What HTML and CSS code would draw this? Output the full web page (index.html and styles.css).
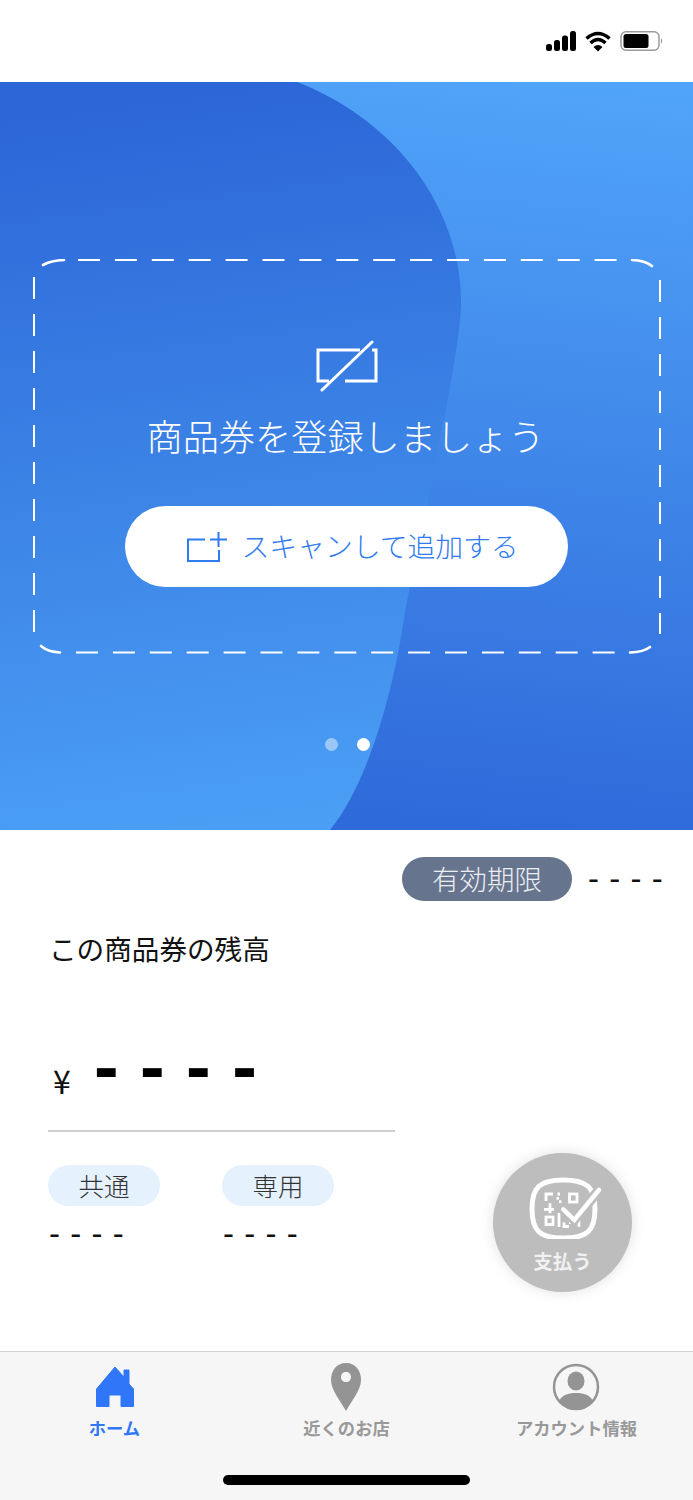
FILE: index.html
```html
<!DOCTYPE html>
<html lang="ja">
<head>
<meta charset="utf-8">
<title>商品券</title>
<link rel="stylesheet" href="styles.css">
</head>
<body>
<div class="phone">
  <header class="status">
    <svg class="status-icons" width="118" height="24" viewBox="0 0 118 24">
      <rect x="0" y="15" width="6" height="7" rx="2.5" fill="#000"/>
      <rect x="8" y="11" width="6" height="11" rx="2.5" fill="#000"/>
      <rect x="16" y="6.500" width="6" height="15.500" rx="2.500" fill="#000"/>
      <rect x="24" y="2" width="6" height="20" rx="2.500" fill="#000"/>
      <path d="M40.500 9.500 Q52 -0.500 63.500 9.500" fill="none" stroke="#000" stroke-width="3.600"/>
      <path d="M44.500 14 Q52 7 59.500 14" fill="none" stroke="#000" stroke-width="3.400"/>
      <path d="M47.500 18 Q52 14 56.500 18 L52 22.500Z" fill="#000"/>
      <rect x="75" y="2.800" width="38" height="18.500" rx="5" fill="none" stroke="#9a9a9a" stroke-width="1.500"/>
      <rect x="77.500" y="5" width="25" height="14" rx="2.500" fill="#000"/>
      <path d="M115 9 Q117.500 12 115 15Z" fill="#9a9a9a"/>
    </svg>
  </header>

  <section class="hero">
    <svg class="hero-bg" width="693" height="748" viewBox="0 0 693 748">
      <defs>
        <linearGradient id="bgG" x1="0.85" y1="0" x2="0.75" y2="1">
          <stop offset="0" stop-color="#50a4f9"/>
          <stop offset="1" stop-color="#2f6ada"/>
        </linearGradient>
        <linearGradient id="blobG" x1="0.3" y1="0.02" x2="0.38" y2="1">
          <stop offset="0" stop-color="#2c66d7"/>
          <stop offset="1" stop-color="#4a9ef4"/>
        </linearGradient>
      </defs>
      <rect width="693" height="748" fill="url(#bgG)"/>
      <path d="M0 0H297C395 38 461 125 461 220C461 275 420 450 405 530C392 620 365 705 330 748H0Z" fill="url(#blobG)"/>
    </svg>

    <div class="card">
      <svg class="card-border" width="629" height="396" viewBox="0 0 629 396">
        <g fill="none" stroke="#fff" stroke-width="2">
          <path stroke-dasharray="22 14.900" d="M45 1H586"/>
          <path stroke-dasharray="22 14.900" d="M43 393.500H584"/>
          <path stroke-dasharray="22 15" d="M1 18V374"/>
          <path stroke-dasharray="22 15" d="M627 21V375"/>
        </g>
        <g fill="none" stroke="#fff" stroke-width="2.600" stroke-linecap="round">
          <path d="M10 6Q18 1.500 31 1"/>
          <path d="M599 1Q612 1.500 619 7"/>
          <path d="M597 393.500Q611 393 617 388"/>
          <path d="M8 387Q15 393 27 393.500"/>
        </g>
      </svg>
      <svg class="no-card-icon" width="62" height="52" viewBox="0 0 62 52">
        <path d="M44 10H2V41H13M29 41H60V10H56" fill="none" stroke="#fff" stroke-width="3"/>
        <path d="M6 50L56 2" fill="none" stroke="#fff" stroke-width="3" stroke-linecap="round"/>
      </svg>
      <h1 class="card-title">商品券を登録しましょう</h1>
      <button class="scan-btn">
        <svg class="scan-icon" width="40" height="32" viewBox="0 0 40 32">
          <path d="M18 8.500H1V30H32V19" fill="none" stroke="#2f7bf0" stroke-width="2"/>
          <path d="M23 8.500H40M31.500 1V16" fill="none" stroke="#2f7bf0" stroke-width="2"/>
        </svg>
        <span class="scan-text">スキャンして追加する</span>
      </button>
    </div>

    <div class="dots">
      <span class="dot dot-dim"></span>
      <span class="dot"></span>
    </div>
  </section>

  <main class="info">
    <div class="expiry">
      <span class="expiry-pill">有効期限</span>
      <span class="dash-sm dash-expiry">----</span>
    </div>
    <p class="balance-label">この商品券の残高</p>
    <div class="balance">
      <span class="yen">¥</span>
      <span class="dash-lg">----</span>
    </div>
    <div class="breakdown">
      <div class="kind">
        <span class="chip">共通</span>
        <span class="dash-sm">----</span>
      </div>
      <div class="kind">
        <span class="chip">専用</span>
        <span class="dash-sm">----</span>
      </div>
    </div>
    <button class="pay">
      <svg class="pay-icon" width="76" height="64" viewBox="0 0 76 64">
        <path d="M34 5C58 5 66 12 66 34C66 56 58 63 34 63C11 63 3 56 3 34C3 12 11 5 34 5Z" fill="none" stroke="#fff" stroke-width="5"/>
        <g fill="none" stroke="#fff" stroke-width="2.800">
          <path d="M17 26V19H24"/>
          <rect x="40.500" y="19" width="7.500" height="8"/>
          <rect x="17" y="42" width="7" height="7.500"/>
          <path d="M15 34.300H25M21 28.300V38.300M30 38V52M35 47.500V51.500H40M40 47.700H50V51.700"/>
          <path d="M28.500 19H31M27.500 23.300H30M30 26.700H32.500"/>
        </g>
        <path d="M34.300 34.300L45.300 45L70 15" fill="none" stroke="#bdbdbd" stroke-width="10"/>
        <path d="M34.300 34.300L45.300 45L70 15" fill="none" stroke="#fff" stroke-width="4.500" stroke-linecap="round"/>
      </svg>
      <span class="pay-label">支払う</span>
    </button>
  </main>

  <nav class="tabbar">
    <a class="tab tab-on">
      <svg width="40" height="42" viewBox="0 0 40 42">
        <path d="M20 1L29 11V4H34V18L38.500 23V40.500H26V29H14V40.500H1.500V23Z" fill="#2f76f8" stroke="#2f76f8" stroke-linejoin="round"/>
      </svg>
      <span>ホーム</span>
    </a>
    <a class="tab">
      <svg width="40" height="48" viewBox="0 0 40 48">
        <path fill-rule="evenodd" d="M20 0C30 0 35 8 35 17C35 27 26 37 20 48C14 37 5 27 5 17C5 8 10 0 20 0ZM20 9C17 9 15 11 15 14C15 17 17 19 20 19C23 19 25 17 25 14C25 11 23 9 20 9Z" fill="#949494"/>
      </svg>
      <span>近くのお店</span>
    </a>
    <a class="tab tab-acct">
      <svg width="48" height="48" viewBox="0 0 48 48">
        <circle cx="24" cy="24" r="22" fill="none" stroke="#949494" stroke-width="2.500"/>
        <ellipse cx="24" cy="18" rx="8.500" ry="9.500" fill="#949494"/>
        <path d="M7 38C10 32 16 30 24 30C32 30 38 32 41 38C37 43 31 46 24 46C17 46 11 43 7 38Z" fill="#949494"/>
      </svg>
      <span>アカウント情報</span>
    </a>
    <div class="home-bar"></div>
  </nav>
</div>
</body>
</html>
```

FILE: styles.css
```css
* { box-sizing: border-box; margin: 0; padding: 0; }
html, body { background: #fff; }
body {
  width: 693px;
  height: 1500px;
  overflow: hidden;
  font-family: "Noto Sans CJK JP", "Liberation Sans", sans-serif;
}
.phone { width: 693px; height: 1500px; display: flex; flex-direction: column; }

.status { height: 82px; display: flex; justify-content: flex-end; padding: 29px 29px 0 0; background: #fff; }
.status-icons { display: block; }

.hero { position: relative; height: 749px; display: flex; flex-direction: column; align-items: flex-start; }
.hero-bg { position: absolute; left: 0; top: 0; }

.card {
  position: relative;
  width: 627px;
  height: 393px;
  margin: 178px 0 0 33px;
  display: flex;
  flex-direction: column;
  align-items: center;
  padding-top: 80px;
}
.card-border { position: absolute; left: 0; top: -1px; }
.no-card-icon { display: block; }
.card-title { font-size: 36.200px; line-height: 48px; font-weight: 300; color: #fff; margin-top: 19px; white-space: nowrap; margin-left: -2px; }
.scan-btn {
  width: 443px;
  height: 81px;
  margin-top: 47px;
  margin-left: -1px;
  border: 0;
  border-radius: 41px;
  background: #fff;
  display: flex;
  align-items: center;
  padding-left: 62px;
  gap: 15px;
  color: #2f7bf0;
  font: 300 27.800px "Noto Sans CJK JP", sans-serif;
  white-space: nowrap;
}
.scan-icon { display: block; margin-top: 0; }
.scan-text { display: block; margin-top: -4px; }

.dots { position: relative; display: flex; gap: 19px; margin: 85px 0 0 325px; }
.dot { width: 13px; height: 13px; border-radius: 50%; background: #fff; }
.dot-dim { background: rgba(255, 255, 255, 0.45); }

.info { position: relative; flex: 1; padding: 0 0 0 48px; }
.expiry { display: flex; align-items: center; justify-content: flex-end; padding: 26px 29px 0 0; gap: 16px; }
.expiry-pill {
  width: 170px;
  height: 44px;
  border-radius: 22px;
  background: #67748d;
  color: #eceef2;
  font-size: 27.500px;
  line-height: 43px;
  font-weight: 300;
  text-align: center;
}
.dash-sm {
  font-family: "Liberation Sans", sans-serif;
  font-size: 33px;
  line-height: 30px;
  letter-spacing: 10.300px;
  color: #111;
  white-space: nowrap;
}
.dash-expiry { width: 76px; }
.balance-label { font-size: 27.600px; line-height: 40px; font-weight: 400; color: #111; margin: 27px 0 0 1px; }
.balance { width: 347px; height: 164px; border-bottom: 2px solid #cfcfd3; display: flex; position: relative; padding: 79px 0 0 4px; }
.yen { font-size: 32px; line-height: 36px; margin-top: 15px; color: #111; width: 41px; margin-left: 1px; }
.dash-lg {
  font-family: "Liberation Sans", sans-serif;
  font-weight: 700;
  font-size: 74px;
  line-height: 40px;
  letter-spacing: 21.400px;
  color: #000;
  white-space: nowrap;
}
.breakdown { display: flex; gap: 62px; margin-top: 33px; }
.kind { width: 112px; display: flex; flex-direction: column; }
.chip {
  height: 41px;
  border-radius: 21px;
  background: #e6f1fe;
  color: #333;
  font-size: 25.500px;
  line-height: 39px;
  font-weight: 300;
  text-align: center;
}
.kind .dash-sm { margin: 13px 0 0 1px; }

.pay {
  position: absolute;
  left: 493px;
  top: 322px;
  width: 139px;
  height: 139px;
  border: 0;
  border-radius: 50%;
  background: #bdbdbd;
  box-shadow: 0 0 14px rgba(0, 0, 0, 0.12);
  display: flex;
  flex-direction: column;
  align-items: center;
  padding-top: 22px;
}
.pay-icon { display: block; margin-left: 9px; }
.pay-label { color: #f1f1f1; font-size: 19.500px; line-height: 26px; font-weight: 700; margin-top: 9px; font-family: "Noto Sans CJK JP", sans-serif; }

.tabbar {
  position: relative;
  height: 149px;
  border-top: 1.500px solid #d2d2d2;
  background: #f6f6f6;
  display: grid;
  grid-template-columns: 229px 233px 231px;
}
.tab { display: flex; flex-direction: column; align-items: center; color: #999; height: 92px; padding-top: 10px; }
.tab svg { display: block; height: 50px; }
.tab span { position: relative; font-size: 17.300px; line-height: 26px; font-weight: 700; white-space: nowrap; margin-top: 3px; }
.tab:nth-child(2) span { margin-left: 2px; }
.tab-on { color: #2f76f8; }
.tab-acct svg { margin-right: 3px; }
.tab-acct span { margin-right: 2px; }
.home-bar { position: absolute; left: 223px; top: 123px; width: 247px; height: 10px; border-radius: 5px; background: #000; }
```
